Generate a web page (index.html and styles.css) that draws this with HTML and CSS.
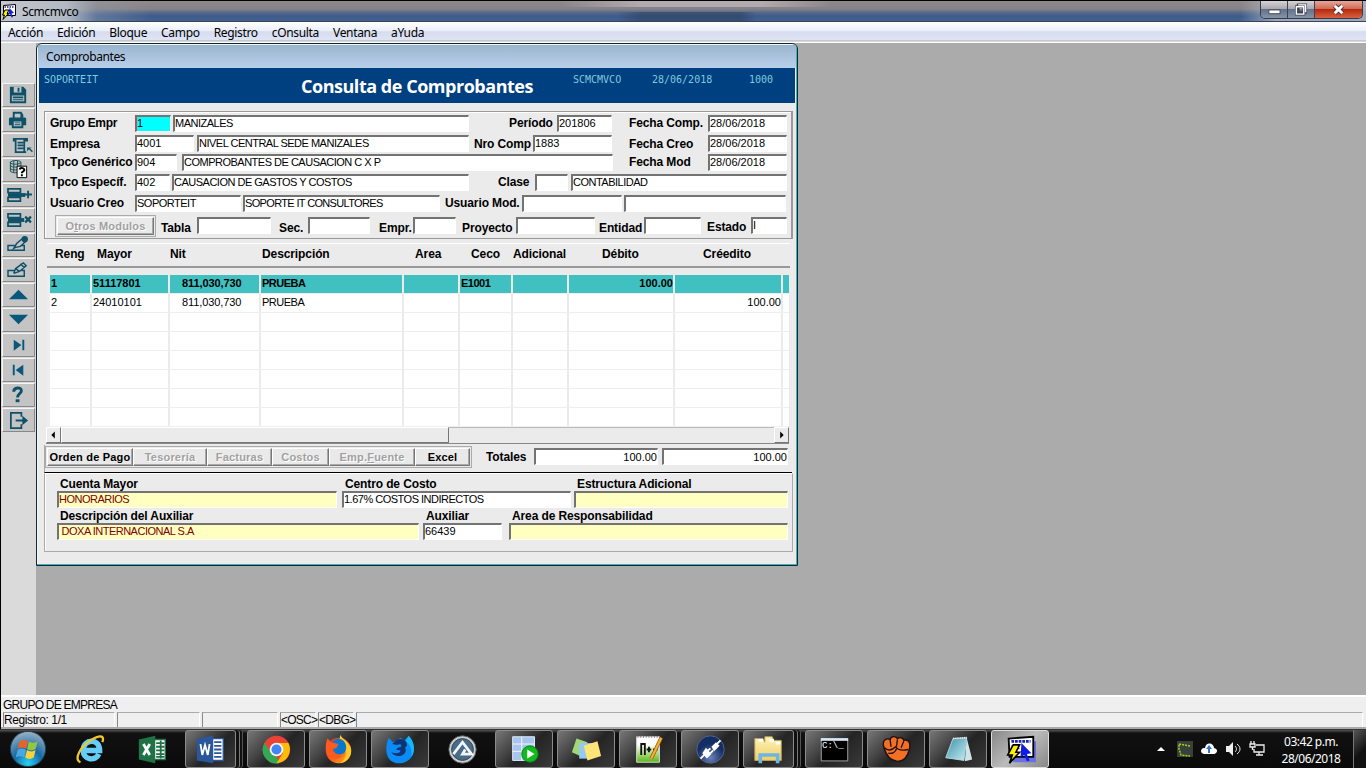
FILE: index.html
```html
<!DOCTYPE html>
<html lang="es">
<head>
<meta charset="utf-8">
<title>Scmcmvco</title>
<link rel="stylesheet" href="styles.css">
</head>
<body>
<div class="app">
<header class="titlebar">
  <svg class="app-icon" viewBox="0 0 32 32"><path fill="#fff" stroke="#000" stroke-width="2" d="M5 3l24-2v22H5z"/><path stroke="#228" stroke-width="3" stroke-dasharray="3 2" d="M7 6h20"/><path fill="#12d" d="M17 8l9 10-5 1 3 7-3 1-3-7-4 3z"/><path fill="#fff200" stroke="#000" stroke-width="2" d="M8 12h8l-4 7h3L4 31l3-9H3z"/></svg>
  <span class="app-name">Scmcmvco</span>
  <div class="caption">
    <span class="cap-btn"><svg viewBox="0 0 28 18"><path fill="#fff" stroke="#445" d="M8.500 9.500h12v4h-12z"/></svg></span>
    <span class="cap-btn"><svg viewBox="0 0 28 18"><path fill="none" stroke="#445" stroke-width="3" d="M11 4h8v8h-8zM9 6h8v8h-8z"/><path fill="none" stroke="#fff" stroke-width="1.500" d="M11 4h8v8M9 6h8v8H9z"/></svg></span>
    <span class="cap-btn close"><svg viewBox="0 0 46 18"><path stroke="#534" stroke-width="5" d="M19 5l8 8M27 5l-8 8"/><path stroke="#fff" stroke-width="3" d="M19 5l8 8M27 5l-8 8"/></svg></span>
  </div>
</header>
<nav class="menu"><span>Acción</span><span>Edición</span><span>Bloque</span><span>Campo</span><span>Registro</span><span>cOnsulta</span><span>Ventana</span><span>aYuda</span></nav>
<main class="workspace">
<aside class="tools">
  <button><svg viewBox="0 0 33 23"><path fill="#0d5068" d="M7 3h14l3 3v14H7z"/><path fill="#c4c4c4" d="M11 3h8v6h-8zM9 12h13v6H9z"/><path fill="#0d5068" d="M15 4h2v4h-2zM10 13h11v2H10zM10 16h11v1H10z"/></svg></button>
  <button><svg viewBox="0 0 33 23"><path fill="#0d5068" d="M10 3h9l2 3v3h2l1 1v7h-3v3H9v-3H6v-7l1-1h3z"/><path fill="#c4c4c4" d="M12 5h6v4h-6zM11 13h8v5h-8z"/><path fill="#0d5068" d="M12 14h6v1h-6zM12 16h6v1h-6z"/></svg></button>
  <button><svg viewBox="0 0 33 23"><path fill="none" stroke="#0d5068" stroke-width="1.800" d="M11 5h14v2h-3v12H13V7h-2V5zM15 9h6M15 12h6M15 15h6M12 19h12"/><path fill="#0d5068" d="M25 14h5l-2 1 3 3-1 1-3-3-2 2z"/></svg></button>
  <button><svg viewBox="0 0 33 23"><path fill="#a9c5c2" stroke="#254f50" d="M7.500 3c3-2 9-2 11 0v10c-3 2-8 2-11 0zM7 4c3 2 8 2 11 0M7 7c3 2 8 2 11 0M7 10c3 2 8 2 11 0M11 2v12M15 2v12"/><path fill="#fff" stroke="#000" d="M14.500 7.500h10v12h-10z"/><path fill="none" stroke="#000" stroke-width="2" d="M17 11c1-3 6-1 5 1l-2.500 2v1M19.500 16v2"/></svg></button>
  <button><svg viewBox="0 0 33 23"><path fill="none" stroke="#0d5068" stroke-width="1.800" d="M5 5h13v4H5zM5 14h13v4H5z"/><path stroke="#0d5068" stroke-width="4" d="M5 11.500h18"/><path stroke="#0d5068" stroke-width="2" d="M22 11h8M26 7v8"/></svg></button>
  <button><svg viewBox="0 0 33 23"><path fill="none" stroke="#0d5068" stroke-width="1.800" d="M5 5h13v4H5zM5 14h13v4H5z"/><path stroke="#0d5068" stroke-width="4" d="M5 11.500h17"/><path stroke="#0d5068" stroke-width="2.300" d="M23 8l6 6M29 8l-6 6"/></svg></button>
  <button><svg viewBox="0 0 33 23"><path fill="none" stroke="#0d5068" stroke-width="1.500" d="M12 12H5v5h17v-5h-4M11 15l3-5 6-5 3 3-5 5-5 1z"/><circle cx="22.500" cy="5.500" r="3.300" fill="#0d5068"/></svg></button>
  <button><svg viewBox="0 0 33 23"><path fill="none" stroke="#0d5068" stroke-width="1.500" d="M12 12H5v6h17v-6h-3M11 15l2-5 8-6 3 3-7 6-6 2M18 5l4 4M13 10l4 3"/></svg></button>
  <button><svg viewBox="0 0 33 23"><path fill="#09577a" d="M16 6l10 10H6z"/></svg></button>
  <button><svg viewBox="0 0 33 23"><path fill="#09577a" d="M6 6h20L16 16z"/></svg></button>
  <button><svg viewBox="0 0 33 23"><path fill="#09577a" d="M11 6l8 5.500-8 6zM20 6h2v11h-2z"/></svg></button>
  <button><svg viewBox="0 0 33 23"><path fill="#09577a" d="M21 6l-8 5.500 8 6zM10 6h2v11h-2z"/></svg></button>
  <button><svg viewBox="0 0 33 23"><path fill="none" stroke="#0d5068" stroke-width="3" d="M11 8c0-5 8-5 8-1 0 3-4 3-4 7"/><path fill="#0d5068" d="M13 16h4v3h-4z"/></svg></button>
  <button><svg viewBox="0 0 33 23"><path fill="none" stroke="#0d5068" stroke-width="1.800" d="M19 8V4H8v16h11v-4"/><path fill="#0d5068" d="M13 11h7V7l6 5-6 5v-4h-7z"/></svg></button>
</aside>
<section class="desktop">
<div class="window">
  <div class="win-title">Comprobantes</div>
  <div class="banner"><span>SOPORTEIT</span><h1>Consulta de Comprobantes</h1><span>SCMCMVCO</span><span>28/06/2018</span><span>1000</span></div>
  <div class="content">
    <div class="master">
      <div class="row r1"><label>Grupo Empr</label><b class="field active">1</b><b class="field txt">MANIZALES</b><label>Período</label><b class="field">201806</b><label>Fecha Comp.</label><b class="field">28/06/2018</b></div>
      <div class="row r2"><label>Empresa</label><b class="field">4001</b><b class="field txt">NIVEL CENTRAL SEDE MANIZALES</b><label>Nro Comp</label><b class="field">1883</b><label>Fecha Creo</label><b class="field">28/06/2018</b></div>
      <div class="row r3"><label>Tpco Genérico</label><b class="field">904</b><b class="field txt">COMPROBANTES DE CAUSACION C X P</b><label>Fecha Mod</label><b class="field">28/06/2018</b></div>
      <div class="row r4"><label>Tpco Específ.</label><b class="field">402</b><b class="field txt">CAUSACION DE GASTOS Y COSTOS</b><label>Clase</label><b class="field"></b><b class="field txt">CONTABILIDAD</b></div>
      <div class="row r5"><label>Usuario Creo</label><b class="field txt">SOPORTEIT</b><b class="field txt tight">SOPORTE IT CONSULTORES</b><label>Usuario Mod.</label><b class="field"></b><b class="field"></b></div>
      <div class="row r6"><div class="btn-frame"><button class="btn off">O<u>t</u>ros Modulos</button></div><label>Tabla</label><b class="field"></b><label>Sec.</label><b class="field"></b><label>Empr.</label><b class="field"></b><label>Proyecto</label><b class="field"></b><label>Entidad</label><b class="field"></b><label class="estado">Estado</label><b class="field">I</b></div>
    </div>
    <div class="heads"><span>Reng</span><span>Mayor</span><span>Nit</span><span>Descripción</span><span>Area</span><span>Ceco</span><span>Adicional</span><span>Débito</span><span>Créedito</span></div>
    <div class="grid">
      <div class="rec selected"><i>1</i><i>51117801</i><i class="nit">811,030,730</i><i class="txt">PRUEBA</i><i></i><i class="txt">E1001</i><i></i><i class="num">100.00</i><i></i><i></i></div>
      <div class="rec"><i>2</i><i>24010101</i><i class="nit">811,030,730</i><i class="txt">PRUEBA</i><i></i><i></i><i></i><i></i><i class="num">100.00</i><i></i></div>
      <div class="rec"><i></i><i></i><i></i><i></i><i></i><i></i><i></i><i></i><i></i><i></i></div>
      <div class="rec"><i></i><i></i><i></i><i></i><i></i><i></i><i></i><i></i><i></i><i></i></div>
      <div class="rec"><i></i><i></i><i></i><i></i><i></i><i></i><i></i><i></i><i></i><i></i></div>
      <div class="rec"><i></i><i></i><i></i><i></i><i></i><i></i><i></i><i></i><i></i><i></i></div>
      <div class="rec"><i></i><i></i><i></i><i></i><i></i><i></i><i></i><i></i><i></i><i></i></div>
      <div class="rec"><i></i><i></i><i></i><i></i><i></i><i></i><i></i><i></i><i></i><i></i></div>
    </div>
    <div class="scroll"><span class="arrow"><svg viewBox="0 0 15 16"><path d="M9 4v8L5 8z"/></svg></span><span class="thumb"></span><span class="track"></span><span class="arrow"><svg viewBox="0 0 15 16"><path d="M6 4v8l4-4z"/></svg></span></div>
    <div class="actions">
      <div class="btn-group"><button class="btn">Orden de Pago</button><button class="btn off">Tesorería</button><button class="btn off">Facturas</button><button class="btn off">Costos</button><button class="btn off">Emp.<u>F</u>uente</button><button class="btn">Excel</button></div>
      <label>Totales</label><b class="field num">100.00</b><b class="field num">100.00</b>
    </div>
    <div class="details">
      <div class="pair pa"><label>Cuenta Mayor</label><label>Centro de Costo</label><label>Estructura Adicional</label><b class="field pale txt">HONORARIOS</b><b class="field txt">1.67% COSTOS INDIRECTOS</b><b class="field pale"></b></div>
      <div class="pair pb"><label>Descripción del Auxiliar</label><label>Auxiliar</label><label>Area de Responsabilidad</label><b class="field pale txt">&nbsp;DOXA INTERNACIONAL S.A</b><b class="field">66439</b><b class="field pale"></b></div>
    </div>
  </div>
</div>
</section>
</main>
<footer class="status"><div class="hint">GRUPO DE EMPRESA</div><div class="cells"><span>Registro: 1/1</span><span></span><span></span><span>&lt;OSC&gt;</span><span>&lt;DBG&gt;</span><span></span></div></footer>
<div class="taskbar">
  <svg width="0" height="0" class="defs"><defs>
    <radialGradient id="orb" cx=".5" cy=".9" r=".9"><stop offset="0" stop-color="#25d3f5"/><stop offset=".45" stop-color="#1769a5"/><stop offset="1" stop-color="#9bb4c4"/></radialGradient>
    <linearGradient id="ff" x2="1" y2="1"><stop offset="0" stop-color="#e3242b"/><stop offset=".6" stop-color="#ff6a16"/><stop offset="1" stop-color="#ffc421"/></linearGradient>
    <linearGradient id="fold" y2="1" x2="0"><stop offset="0" stop-color="#fdf3b9"/><stop offset="1" stop-color="#f1cf67"/></linearGradient>
    <linearGradient id="npp" y2="1" x2="0"><stop offset=".3" stop-color="#fff"/><stop offset="1" stop-color="#59b812"/></linearGradient>
    <radialGradient id="navy" cy=".8"><stop offset="0" stop-color="#6b82b8"/><stop offset="1" stop-color="#142d63"/></radialGradient>
    <linearGradient id="teal" x2="1" y2="1"><stop offset="0" stop-color="#3b8da5"/><stop offset="1" stop-color="#c4eef5"/></linearGradient>
  </defs></svg>
  <span class="task start"><svg viewBox="0 0 40 40"><circle cx="20" cy="20" r="18.500" fill="url(#orb)" stroke="#263d4d"/><path fill="#e8632b" d="M11 12c3-2 6-2 9 0l-2 8c-3-2-6-2-9 0z"/><path fill="#91c83e" d="M21 12c3 2 6 2 9 0l-2 8c-3 2-6 2-9 0z"/><path fill="#4ca6df" d="M9 21c3-2 6-2 9 0l-2 8c-3-2-6-2-9 0z"/><path fill="#fbd13c" d="M19 21c3 2 6 2 9 0l-2 8c-3 2-6 2-9 0z"/></svg></span>
  <span class="task plain"><svg viewBox="0 0 34 34"><path fill="none" stroke="#65cdf8" stroke-width="6" d="M10 18h17c0-14-18-13-18 0 0 11 14 12 17 4"/><path fill="none" stroke="#f5c62c" stroke-width="2.500" d="M6 31C-2 28 6 14 17 7 27 1 33 1 30 9"/></svg></span>
  <span class="task plain"><svg viewBox="0 0 34 34"><path fill="#fff" stroke="#207245" stroke-width="1.500" d="M18 6h13v22H18z"/><path stroke="#207245" stroke-width="2" d="M21 10h9M21 14h9M21 18h9M21 22h9M21 25h9M26 7v20"/><path fill="#207245" d="M2 6l18-4v30L2 28z"/><path stroke="#fff" stroke-width="3" d="M7 11l7 12M14 11L7 23"/></svg></span>
  <span class="task stack"><svg viewBox="0 0 34 34"><path fill="#fff" stroke="#2b579a" stroke-width="1.500" d="M18 5h13v24H18z"/><path stroke="#2b579a" stroke-width="2" d="M21 9h8M21 13h8M21 17h8M21 21h8M21 25h8"/><path fill="#2b579a" d="M2 5l18-3v30L2 29z"/><path fill="none" stroke="#fff" stroke-width="2" d="M6 11l2 12 3-11 3 11 2-12"/></svg></span>
  <span class="task"><svg viewBox="0 0 34 34"><circle cx="17" cy="17" r="15" fill="#ea4335"/><path fill="#34a853" d="M4 9.500L12 22l5 3 3 7A15 15 0 0 1 4 9.500z"/><path fill="#fbbc05" d="M17 10h13a15 15 0 0 1-13 22l7-11z"/><circle cx="17" cy="17" r="7.500" fill="#f4f4f4"/><circle cx="17" cy="17" r="5.500" fill="#4285f4"/></svg></span>
  <span class="task"><svg viewBox="0 0 34 34"><circle cx="17" cy="18" r="14" fill="url(#ff)"/><path fill="#ffca28" d="M19 1c2 4 7 6 9 10 7 9 0 20-9 21 6-4 8-12 4-17-3-5-6-8-4-14z"/><path fill="#0878ce" d="M10 9c4-5 10-5 13-1 4 5 3 12-2 14-6 2-12-3-11-13z"/><path fill="#ff5a20" d="M3 15c0-5 1-8 2-10l4 4 8 2-2 4-5 2c1 6 6 7 11 6-3 5-9 6-14 2-3-3-4-7-4-10z"/></svg></span>
  <span class="task"><svg viewBox="0 0 34 34"><path fill="#0b8bf5" d="M4 4l5 5 8-5 4 3 5-5c10 10 7 28-8 30C0 34-1 16 4 4z"/><path fill="#0e3474" d="M12 7c6-4 13 0 12 6l-2 2c3 5-3 10-8 9-3 0-6-2-7-4 5 2 10 1 10-2l-5-1 2-2 4-1-1-3-4 1-5-1z"/><path fill="#16b7f4" d="M26 2c6 7 8 16 3 23 1-9-2-13-6-17z"/></svg></span>
  <span class="task plain auto"><svg viewBox="0 0 34 34"><circle cx="17" cy="17" r="15" fill="#cbd0d4" stroke="#555"/><circle cx="17" cy="17" r="12" fill="#486b89" stroke="#344"/><path fill="none" stroke="#f4f4f4" stroke-width="3" d="M7 22L17 9l10 13H17l3-5"/></svg></span>
  <span class="task"><svg viewBox="0 0 34 34"><path fill="#a8c5ee" stroke="#e7f3ff" d="M4 3h24v26H4z"/><path stroke="#f8faff" d="M4 11h24M4 19h24M14 3v26"/><circle cx="23" cy="22" r="9" fill="#13b91e" stroke="#07810e"/><path fill="#fff" d="M20 17v10l8-5z"/></svg></span>
  <span class="task"><svg viewBox="0 0 34 34"><path fill="#a1d875" d="M6 5l12 4-6 16-11-5z"/><path fill="#93c9f2" d="M9 10h14v17H9z"/><path fill="#ffe477" d="M14 13l15-5 4 16-15 5z"/></svg></span>
  <span class="task"><svg viewBox="0 0 34 34"><path fill="url(#npp)" stroke="#ddd" d="M4 3h25v28H4z"/><path stroke="#777" stroke-width="2" stroke-dasharray="1 2" d="M5 3h23"/><path fill="none" stroke="#111" stroke-width="2" d="M9 23V11h4v12M15 17h5M17.500 14v6M22 17h5"/><path stroke="#9a591c" stroke-width="4" d="M31 4L20 27"/><path stroke="#f3b12e" stroke-width="2.500" d="M31 4L20 27"/></svg></span>
  <span class="task"><svg viewBox="0 0 34 34"><circle cx="17" cy="17" r="15" fill="url(#navy)" stroke="#56698e"/><path stroke="#fff" stroke-width="2" d="M6 27l5-5M23 12l5-5M14 18l3-2M17 21l3-3"/><path fill="#fff" d="M8 21l4-6 6 7-5 5zM18 14l5-5 4 4-6 6z"/></svg></span>
  <span class="task stack"><svg viewBox="0 0 34 34"><path fill="url(#fold)" stroke="#c4a458" d="M2 5h9l2 4V3h8l2 4h8v22H2z"/><path stroke="#fff" stroke-width="3" d="M6 7h5M18 7h5M25 10h5"/><path fill="none" stroke="#6cb6e6" stroke-width="4" d="M8 32v-9h19v9"/></svg></span>
  <span class="task"><svg viewBox="0 0 34 34"><path fill="#000" stroke="#aaa" d="M2.500 5.500h29v24h-29z"/><path stroke="#d5e5f5" stroke-width="3" d="M2 6h30"/></svg><em>C:\_</em></span>
  <span class="task"><svg viewBox="0 0 34 34"><path fill="#f27024" stroke="#211" stroke-width="1.500" d="M3 14c-2-7 3-10 7-8 1-4 6-4 8-1 3-2 6-1 7 2 5-2 8 3 6 10-2 9-7 13-13 13C9 29 5 22 3 14z"/><path fill="none" stroke="#211" stroke-width="1.500" d="M10 6l1 8M18 6l-1 8M25 8l-3 7M4 15c3 4 8 3 12-1 3 5 9 4 14 3M8 21c4 1 8-1 9-5"/></svg></span>
  <span class="task"><svg viewBox="0 0 34 34"><path fill="#d0e4e8" d="M26 4l6 24-8 2z"/><path fill="url(#teal)" stroke="#b3dbe3" d="M11 5l15-1-3 25-20-3z"/><path stroke="#eee" stroke-width="2" stroke-dasharray="1 1" d="M11 5l15-1"/></svg></span>
  <span class="task current"><svg viewBox="0 0 34 34"><path fill="#6a70e0" d="M9 8h25v23H9z"/><path fill="#fff" stroke="#000" stroke-width="2" d="M4 5l27-2v22H5z"/><path stroke="#1723b8" stroke-width="3" stroke-dasharray="3 1" d="M7 8h21"/><path stroke="#d33" stroke-width="1.500" d="M7 13h9M7 16h9"/><path fill="#101be5" d="M18 10l11 11-5 1 3 7-3 1-3-7-4 3z"/><path fill="#fff200" stroke="#000" stroke-width="1.800" d="M9 12h7l-4 8h4L5 32l3-9H3z"/></svg></span>
  <div class="tray">
    <svg viewBox="0 0 8 5" class="up"><path fill="#fff" d="M0 4h8L4 0z"/></svg>
    <svg viewBox="0 0 16 16"><path fill="#37403a" d="M0 0h16v16H0z"/><path fill="none" stroke="#a3d414" stroke-width="1.500" stroke-dasharray="2 1" d="M13 5L2 3v5l2 6 9 1"/></svg>
    <svg viewBox="0 0 16 16"><path fill="#fff" d="M3 13c-5-1-3-7 1-6 1-7 9-5 9 0 5 1 3 6 0 6z"/><path fill="#2f76d2" d="M7 12V8H5l3-4 3 4H9v4z"/></svg>
    <svg viewBox="0 0 16 16"><path fill="#eee" d="M1 5h3l4-4v14l-4-4H1z"/><path fill="none" stroke="#eee" d="M10 5c2 2 2 4 0 6M12 3c4 3 4 7 0 10"/></svg>
    <svg viewBox="0 0 16 16"><path fill="none" stroke="#eee" stroke-width="1.300" d="M7 4h8v7H5V8M10 11v3M7 14h7M2 0v3M5 0v3M1 3h5v3H1zM3.500 6v3"/></svg>
    <div class="clock"><span>03:42 p.m.</span><span>28/06/2018</span></div>
    <span class="peek"></span>
  </div>
</div>
</div>
</body>
</html>
```
FILE: styles.css
```css
*{box-sizing:border-box}
body{margin:0;overflow:hidden;font-family:"Liberation Sans",Arial,sans-serif;font-size:11px;color:#000}
button{font:inherit;padding:0;margin:0}
svg{display:block}
.app{width:1366px;height:768px;display:flex;flex-direction:column;background:#000;overflow:hidden}
.titlebar{height:22px;margin-left:1px;border-top:1px solid #000;border-bottom:1px solid #34445f;display:flex;align-items:flex-start;background:linear-gradient(90deg,#c3c8cf 0,#b3b9c3 65px,rgba(150,160,178,.4) 95px,transparent 150px,transparent 1240px,rgba(180,185,196,.8) 1275px),linear-gradient(90deg,transparent 560px,rgba(225,215,220,.45) 640px,rgba(225,215,220,.45) 760px,transparent 830px) 0 0/100% 6px no-repeat,linear-gradient(90deg,transparent 615px,rgba(40,60,90,.5) 640px,rgba(40,60,90,.5) 740px,transparent 755px) 0 11px/100% 9px no-repeat,linear-gradient(#8f898a 0,#858387 40%,#56698a 58%,#3c5c8d 75%,#45618b 100%)}
.app-icon{width:16px;height:16px;margin:3px 0 0}
.app-name{font:12px/21px "Noto Sans",sans-serif;letter-spacing:-.4px;margin-left:5px}
.caption{margin-left:auto;margin-right:3px;display:flex;height:18px;border:1px solid #343b4a;border-top:0;border-radius:0 0 5px 5px;overflow:hidden}
.cap-btn{width:27px;border-right:1px solid #3b4353;background:linear-gradient(#d5d3d6,#aaa9b0 45%,#64728a 50%,#8594a8)}
.cap-btn svg{height:17px;width:100%}
.cap-btn.close{width:47px;border:0;background:linear-gradient(#e7a796,#d26b56 45%,#b62a10 50%,#d9613f)}
.menu{height:21px;margin-left:1px;background:linear-gradient(#fff 0,#eaeff8 42%,#d6ddef 46%,#dfe4f4 85%,#b4b5bb 90%,#fff 96%);display:flex;gap:14px;padding-left:7px;font:12px/21px "Noto Sans",sans-serif;letter-spacing:-.33px}
.workspace{height:652px;display:flex}
.tools{width:36px;border-left:1px solid #000;background:#dadada;padding:40px 0 0 1px;display:flex;flex-direction:column;gap:1px}
.tools button{width:33px;height:24px;border:1px solid;border-color:#f5f5f5 #888 #888 #f5f5f5;background:#c4c4c4}
.tools svg{width:32px;height:22px}
.desktop{flex:1;background:#ababab}
.window{width:762px;height:523px;border:1px solid #142832;border-radius:6px 6px 0 0;background:#ebebeb;overflow:hidden;box-shadow:inset -1px -1px #38b6bf,inset 1px 1px #eef7ff;padding:1px 2px}
.win-title{height:23px;background:linear-gradient(#9bb5cf,#b9d0eb);font:12px/24px "Noto Sans",sans-serif;letter-spacing:-.38px;margin:0 -1px;padding-left:8px}
.banner{height:35px;background:#004080;color:#7fc9dc;display:grid;grid-template-columns:257px 272px 79px 97px 40px;padding-left:5px;font:10px/24px "DejaVu Sans Mono",monospace}
.banner h1{margin:0;color:#fff;font:bold 18px/37px "Open Sans",sans-serif;white-space:nowrap;letter-spacing:-.47px}
.content{height:462px}
.master{margin:8px 2px 0 5px;height:128px;border:1px solid #999;border-right:2px solid #999;box-shadow:inset 1px 1px #fff;padding:2px 0 0 5px}
.row{display:grid;height:17px;align-items:center}
.r1{grid-template-columns:85px 38px 336px 48px 72px 79px 79px}
.r2{grid-template-columns:85px 62px 277px 59px 96px 79px 79px}
.r3{grid-template-columns:85px 47px 447px 79px 79px}
.r4{grid-template-columns:85px 37px 326px 37px 36px 216px}
.r5{grid-template-columns:85px 108px 202px 77px 102px 162px}
.r6{grid-template-columns:111px 36px 82px 29px 71px 34px 49px 54px 83px 45px 63px 44px 36px}
.r2{margin-top:3px}.r3{margin-top:2px}.r4{margin-top:3px}.r5{margin-top:4px}.r6{margin-top:5px}
.row label{font-weight:bold;font-size:12px;line-height:17px;padding-top:1px;white-space:nowrap;letter-spacing:-.12px}
.r1 label:first-child{letter-spacing:-.28px}
.r2 label{padding-top:2px}
.field{display:block;height:17px;border:1px solid;border-top:2px solid #737373;border-left:2px solid #737373;border-right-color:#fff;border-bottom-color:#fff;background:#fff;font-weight:normal;font-size:11px;line-height:13px;white-space:nowrap;overflow:hidden}
.txt{letter-spacing:-.5px}.txt.tight{letter-spacing:-.65px}
.r1 .field:nth-child(2){width:36px}.r1 .field:nth-child(3){width:296px}.r1 .field:nth-child(5){width:55px}
.r2 .field:nth-child(2){width:59px}.r2 .field:nth-child(3){width:272px}.r2 .field:nth-child(5){width:79px}
.r3 .field:nth-child(2){width:42px}.r3 .field:nth-child(3){width:431px}
.r4 .field:nth-child(2){width:35px}.r4 .field:nth-child(3){width:297px}.r4 .field:nth-child(5){width:33px}
.r5 .field:nth-child(2){width:106px}.r5 .field:nth-child(3){width:197px}.r5 .field:nth-child(5){width:100px}
.r6{height:22px}.r6 .field{margin-bottom:4px}.r6 label{padding-top:3px}.r6 .estado{padding-top:0}
.r6 .field:nth-child(3){width:74px}.r6 .field:nth-child(5){width:62px}.r6 .field:nth-child(7){width:43px}.r6 .field:nth-child(9){width:79px}.r6 .field:nth-child(11){width:57px}
.field.active{background:#00ffff;border-left-color:#b74c68}
.btn-frame{width:101px;height:22px;border:1px solid #aaa;padding:1px;margin:-2px 0 0 5px}
.btn{height:18px;border:1px solid;border-color:#fff #777 #777 #fff;box-shadow:inset -1px -1px #aaa;background:#e9e9e9;font-weight:bold;font-size:11px;letter-spacing:.2px;line-height:14px;white-space:nowrap}
.btn-frame .btn{width:97px}.btn.off{color:#a1a1a1;text-shadow:1px 1px #fff}
.heads{margin:4px 5px 0 8px;height:25px;border-top:1px solid #fff;border-bottom:2px solid #999;display:grid;grid-template-columns:42px 73px 92px 153px 56px 42px 89px 101px 60px;padding-left:8px;font:bold 12px/21px "Liberation Sans",sans-serif;letter-spacing:-.1px;white-space:nowrap}
.grid{margin:7px 6px 0 8px;height:152px;background:#fff}
.rec{height:19px;border-bottom:1px solid #eee;display:grid;grid-template-columns:45px 78px 91px 143px 56px 53px 56px 106px 108px 6px}
.rec i{font-style:normal;font-size:11px;line-height:17px;border-right:2px solid #ebebeb;white-space:nowrap;padding-left:1px}
.rec i:first-child{border-left:3px solid #eee}.rec i:last-child{border-right:0}
.rec.selected i{font-weight:bold;background:#40c0c0}
.rec .nit{padding-left:12px;letter-spacing:-.1px}.rec .num{text-align:right}
.scroll{height:17px;margin:0 6px 0 7px;display:flex;border-bottom:1px solid #888;background:#ebebeb}
.arrow{width:15px;height:16px;border:1px solid;border-color:#fff #777 #777 #fff}.arrow svg{width:13px;height:14px}
.thumb{width:388px;border:1px solid;border-color:#fff #777 #777 #fff}.track{flex:1;border-top:1px solid #bbb}
.actions{height:28px;margin:1px 3px 0 5px;border-bottom:1px solid #000;border-left:1px solid #aaa;display:grid;grid-template-columns:441px 48px 128px 126px;padding-top:2px}
.btn-group{display:flex;width:427px;height:22px;border:1px solid #aaa;padding:1px;margin-top:-1px}
.btn-group .btn:nth-child(1){width:86px}.btn-group .btn:nth-child(2){width:74px}.btn-group .btn:nth-child(3){width:65px}.btn-group .btn:nth-child(4){width:57px}.btn-group .btn:nth-child(5){width:86px}.btn-group .btn:nth-child(6){width:55px}
.actions label,.details label{font-weight:bold;font-size:12px;line-height:21px;white-space:nowrap;letter-spacing:-.12px}
.actions .field{margin-top:1px;line-height:14px}.actions .field:nth-child(3){width:124px}.actions .num{text-align:right}
.details{height:79px;margin:0 2px 0 5px;border:1px solid #aaa;border-top-color:#fff;box-shadow:inset 1px 0 #fff;padding:1px 0 0 12px}
.pair{display:grid;grid-template-rows:16px 17px}.pair label{line-height:18px;padding-left:3px}
.pa{grid-template-columns:285px 232px 214px}.pb{grid-template-columns:366px 86px 279px;margin-top:-1px}
.pa .field:nth-child(4){width:280px}.pa .field:nth-child(5){width:229px}
.pb .field:nth-child(4){width:362px}.pb .field:nth-child(5){width:79px}
.pale{background:#ffffc0;color:#800000}
.status{height:34px;margin-left:1px;background:#efefef;border-top:2px solid #fff;border-bottom:2px solid #aaa;font-size:12px;letter-spacing:-.75px}
.hint{height:15px;line-height:16px;padding-left:2px}
.cells{height:15px;display:grid;grid-template-columns:112px 83px 76px 36px 36px 1fr;gap:2px;padding:0 3px 0 2px;line-height:14px}
.cells span{border-left:1px solid #888;border-top:1px solid #aaa;border-right:1px solid #fff;white-space:nowrap}
.cells span:first-child{letter-spacing:-.4px}
.taskbar{height:39px;background:linear-gradient(#555 0,#111 3px,#0a0a0a);display:flex;border-top:1px solid #333;gap:4px}
.defs{position:absolute}
.task{width:58px;height:38px;flex:none;border:1px solid #8b8b8b;border-radius:3px;background:linear-gradient(135deg,#777 0,#444 35%,#242424 55%,#3a3a3a);display:flex;align-items:center;justify-content:center;position:relative}
.task svg{width:31px;height:31px}
.task.start{width:55px;border:0;background:none}.task.start svg{width:38px;height:38px}
.task.plain{border:0;background:none}.task.start+.plain{margin-left:2px}
.task.stack{width:51px;box-shadow:3px 0 #111,4px 0 #777,6px 0 #111,7px 0 #555;margin-right:7px}
.task.current{background:linear-gradient(135deg,#888,#bbb 50%,#888);border-color:#ddd}
.task em{position:absolute;left:16px;top:10px;color:#fff;font:normal 9px/10px "Liberation Mono",monospace}
.tray{margin-left:auto;display:flex;align-items:center;gap:8px}
.tray svg{width:16px;height:16px}.tray .up{width:8px;height:5px;margin-right:4px}
.clock{display:flex;flex-direction:column;align-items:center;font:12px/17px "Noto Sans",sans-serif;letter-spacing:-.5px;color:#fff;width:62px;margin:2px 3px 0 7px;white-space:nowrap}
.peek{width:13px;height:38px;border-left:1px solid #777;background:linear-gradient(135deg,#555,#111 60%)}
```
